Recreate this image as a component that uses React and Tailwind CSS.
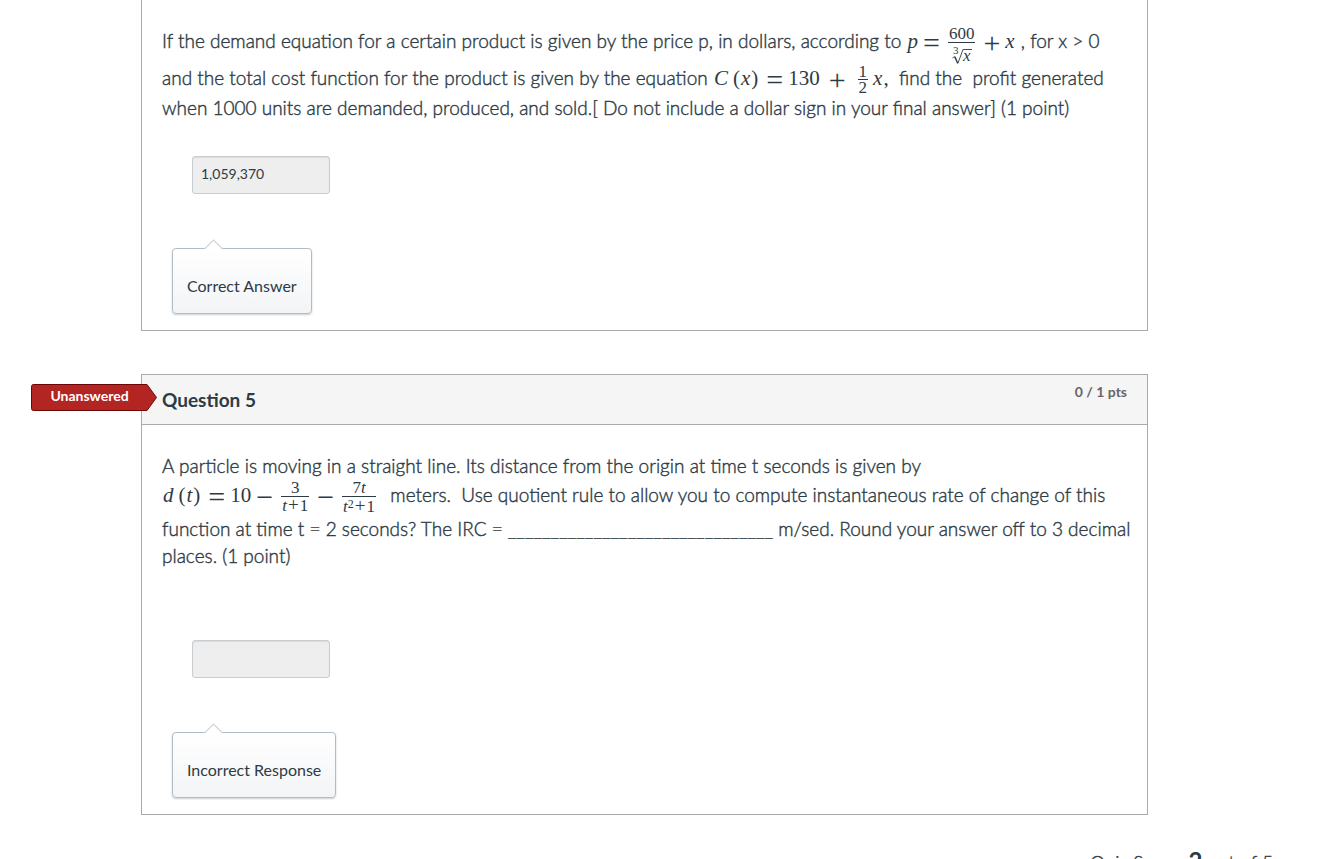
import React from "react";

const mathFont = "font-['Liberation_Serif',serif]";

function MathRow({ label, children }) {
  return (
    <span
      role="math"
      aria-label={label}
      className={`inline-block text-[21px] leading-[24px] font-normal whitespace-nowrap [-webkit-text-stroke:0] ${mathFont}`}
    >
      {children}
    </span>
  );
}

function Op({ children }) {
  return <span className="inline-block px-1 align-middle text-[30px] leading-[20px]">{children}</span>;
}

function Var({ children }) {
  return <i className="px-px">{children}</i>;
}

function Frac({ top, bottom, tight = false }) {
  return (
    <span
      className={`mx-1 inline-grid auto-rows-fr text-center align-middle text-[17px] ${tight ? "leading-[14px]" : "leading-[16px]"}`}
    >
      <span className="flex items-end justify-center border-b border-[#2d3b45] px-px">{top}</span>
      <span className="flex items-start justify-center px-px pt-px">{bottom}</span>
    </span>
  );
}

function ScriptPlus() {
  return <span className="px-px text-[19px] leading-[12px]">+</span>;
}

function CubeRoot() {
  return (
    <svg width="22" height="21" viewBox="0 0 22 21" fill="none" stroke="#2d3b45" aria-hidden="true">
      <path d="M1.5 14l2.2-1.4" strokeWidth="0.8" />
      <path d="M3.7 12.6l3 6.6" strokeWidth="1.4" />
      <path d="M6.8 19.6L12 5.5h9" strokeWidth="0.9" />
      <text x="2" y="10" fontSize="11" fill="#2d3b45" stroke="none" fontFamily="Liberation Serif, serif">3</text>
      <text x="12" y="17" fontSize="17" fontStyle="italic" fill="#2d3b45" stroke="none" fontFamily="Liberation Serif, serif">x</text>
    </svg>
  );
}

function AnswerBox({ id, value }) {
  return (
    <div className="ml-[30px]">
      <input
        id={id}
        type="text"
        aria-label="Your answer"
        readOnly
        defaultValue={value}
        className="block h-[38px] w-[138px] rounded-[3px] border border-[#c7cdd1] bg-[#eeeeee] px-2 pb-1 text-[14px] text-[#2d3b45] shadow-[inset_0_1px_1px_rgba(0,0,0,0.08)] outline-none"
      />
    </div>
  );
}

function Balloon({ children }) {
  return (
    <div className="relative ml-[10px] mt-[54px] h-[66px] w-fit rounded-[4px] border border-[#b0bcc6] bg-linear-to-b from-white to-[#f2f4f6] px-[14px] pt-[25px] text-[16px] leading-[24px] shadow-[0_1px_2px_rgba(0,0,0,0.2)]">
      <svg className="absolute -top-[10px] left-[31px]" width="19" height="11" viewBox="0 0 19 11" aria-hidden="true">
        <path d="M0 11L9.5 1L19 11Z" fill="white" />
        <path d="M0.5 10L9.5 1L18.5 10" fill="none" stroke="#d0d6db" strokeWidth="1.2" />
      </svg>
      {children}
    </div>
  );
}

export default function App() {
  return (
    <main className="pr-[170px] pl-[141px] font-[Lato,sans-serif] text-[#2d3b45]">
      <section className="border border-t-0 border-[#aaaaaa] px-5 pt-[21px] pb-4">
        <p className="text-[19px] leading-[26px] font-light [-webkit-text-stroke:0.4px]">
          If the demand equation for a certain product is given by the price p, in dollars, according to{" "}
          <MathRow label="p = 600 over the cube root of x, plus x">
            <Var>p</Var>
            <Op>=</Op>
            <Frac top="600" bottom={<CubeRoot />} />
            <Op>+</Op>
            <Var>x</Var>
          </MathRow>{" "}
          , for x &gt; 0 and the total cost function for the product is given by the equation{" "}
          <MathRow label="C(x) = 130 + one half x">
            <Var>C</Var>
            <span className="pl-1">(</span>
            <Var>x</Var>
            <span className="pr-1">)</span>
            <Op>=</Op>
            <span className="px-px">130</span>
            <span className="px-1"><Op>+</Op></span>
            <Frac top="1" bottom="2" tight />
            <Var>x</Var>
            <span>,</span>
          </MathRow>
          &nbsp; find the &nbsp;profit generated when 1000 units are demanded, produced, and sold.[ Do not include a dollar
          sign in your final answer] (1 point)
        </p>
        <div className="mt-[35px]">
          <AnswerBox id="answer-4" value="1,059,370" />
        </div>
        <Balloon>Correct Answer</Balloon>
      </section>

      <section className="relative mt-[43px] border border-[#aaaaaa]">
        <div className="absolute top-[9px] -left-[111px] h-[27px] w-[126px]">
          <svg className="absolute inset-0" width="126" height="27" viewBox="0 0 126 27" aria-hidden="true">
            <path
              d="M2.5 0.5H116L125.5 13.5L116 26.5H2.5Q0.5 26.5 0.5 24.5V2.5Q0.5 0.5 2.5 0.5Z"
              fill="#b22522"
              stroke="#6b0705"
            />
          </svg>
          <span className="relative block pr-[9px] text-center text-[14px] leading-[24px] font-bold text-white">
            Unanswered
          </span>
        </div>
        <header className="flex h-[50px] items-start justify-between border-b border-[#aaaaaa] bg-[#f5f5f5] px-5">
          <h2 className="text-[19px] leading-[50px] font-bold">Question 5</h2>
          <span className="pt-2 text-[14px] leading-[18px] font-bold text-[#666666]">0 / 1 pts</span>
        </header>
        <div className="pt-[27px] pr-3 pb-4 pl-5">
          <p className="text-[19px] leading-[27px] font-light [-webkit-text-stroke:0.4px]">
            A particle is moving in a straight line. Its distance from the origin at time t seconds is given by{" "}
            <MathRow label="d(t) = 10 - 3 over (t + 1) - 7t over (t squared + 1)">
              <Var>d</Var>
              <span className="pl-1">(</span>
              <Var>t</Var>
              <span className="pr-1">)</span>
              <Op>=</Op>
              <span className="px-px">10</span>
              <Op>−</Op>
              <Frac top="3" bottom={<span><i>t</i><ScriptPlus />1</span>} />
              <Op>−</Op>
              <Frac
                top={<span>7<i>t</i></span>}
                bottom={<span><i>t</i><span className="align-[4px] text-[12px] leading-none">2</span><ScriptPlus />1</span>}
              />
            </MathRow>
            &nbsp; meters. &nbsp;Use quotient rule to allow you to compute instantaneous rate of change of this function at
            time t = 2 seconds? The IRC = _______________________________ m/sed. Round your answer off to 3 decimal places.
            (1 point)
          </p>
          <div className="mt-[71px]">
            <AnswerBox id="answer-5" value="" />
          </div>
          <Balloon>Incorrect Response</Balloon>
        </div>
      </section>

      <p className="mt-[32px] -mr-[125px] text-right text-[19px] leading-[28px] font-light [-webkit-text-stroke:0.4px]">
        Quiz Score: <strong className="text-[24px] font-bold [-webkit-text-stroke:0]">2</strong> out of 5
      </p>
    </main>
  );
}
